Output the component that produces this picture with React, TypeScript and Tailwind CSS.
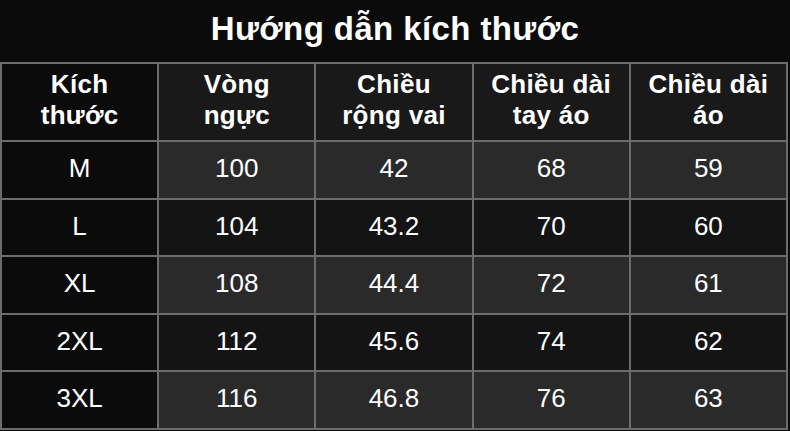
import React from "react";

const header = ["Kích\nthước", "Vòng\nngực", "Chiều\nrộng vai", "Chiều dài\ntay áo", "Chiều dài\náo"];
const rows = [
  ["M", "100", "42", "68", "59"],
  ["L", "104", "43.2", "70", "60"],
  ["XL", "108", "44.4", "72", "61"],
  ["2XL", "112", "45.6", "74", "62"],
  ["3XL", "116", "46.8", "76", "63"],
];

export default function App() {
  return (
    <div
      className="w-[790px] h-[431px] overflow-hidden bg-[#0b0b0b] text-white"
      style={{ fontFamily: '"Liberation Sans", Arial, sans-serif' }}
    >
      <div className="h-[62px] flex items-center justify-center pb-[6px]">
        <h1 className="text-[33px] font-bold leading-none tracking-[0.4px]">Hướng dẫn kích thước</h1>
      </div>
      <table className="w-[788px] border-collapse table-fixed">
        <thead>
          <tr className="h-[78px]">
            {header.map((h, i) => (
              <th
                key={i}
                className={`border-2 border-[#6c6c6c] text-[26px] font-bold leading-[31px] tracking-[0.3px] whitespace-pre-line text-center align-middle pb-[4px] ${
                  i === 0 ? "bg-[#0b0b0b]" : "bg-[#191919]"
                }`}
              >
                {h}
              </th>
            ))}
          </tr>
        </thead>
        <tbody>
          {rows.map((r, ri) => (
            <tr key={ri} className="h-[57.5px]">
              {r.map((c, ci) => (
                <td
                  key={ci}
                  className={`border-2 border-[#6c6c6c] text-[26px] font-normal text-center align-middle pb-[2px] ${
                    ci === 0 ? "bg-[#0b0b0b]" : ri % 2 === 0 ? "bg-[#2a2a2a]" : "bg-[#141414]"
                  }`}
                >
                  {c}
                </td>
              ))}
            </tr>
          ))}
        </tbody>
      </table>
    </div>
  );
}
